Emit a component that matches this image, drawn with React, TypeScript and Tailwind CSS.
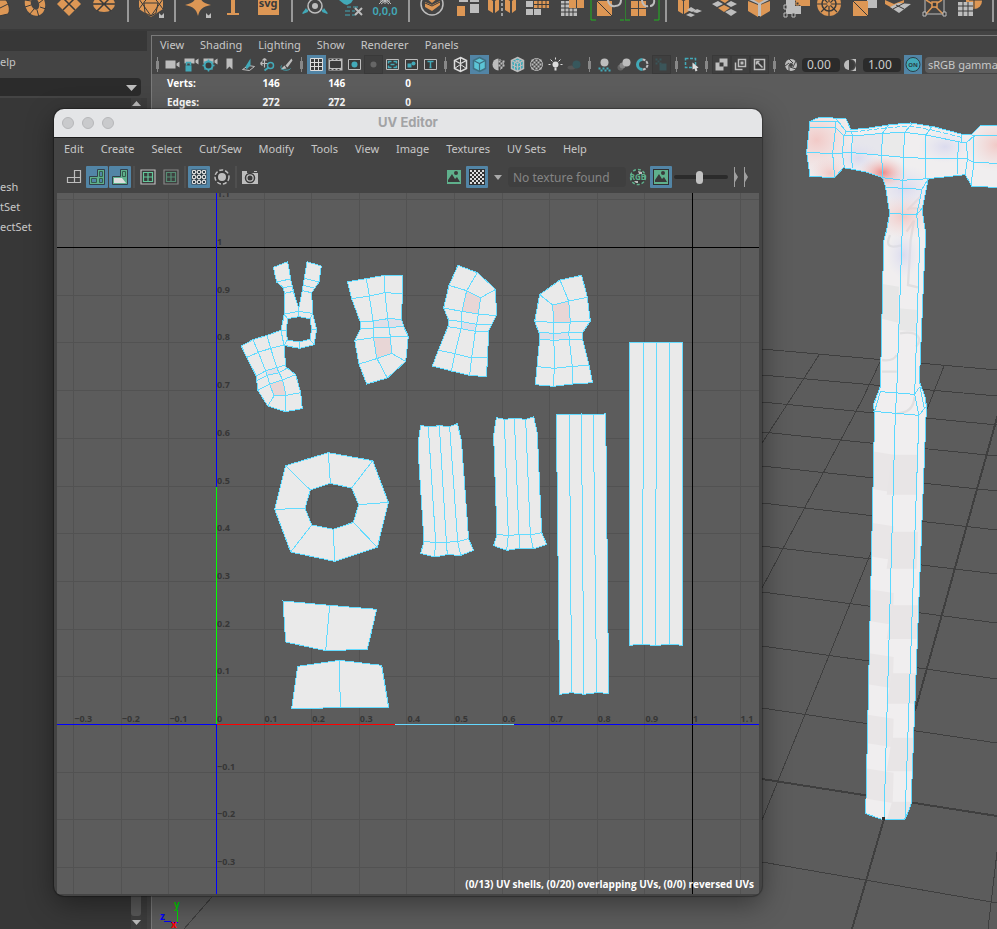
import React from 'react';

const O = '#dd9755';
const G = '#bdbdbd';
const T = '#42a9b8';
const D = '#3a3a3a';
const M = '#5fb08c';

/* ---------- Shelf ---------- */

const corner = <path d="M8 18V13L13 18H8ZM13 13V18H8Z" fill={G} />;

const shelf: (React.ReactNode | null)[] = [
  <path d="M0 0H7C11 5 11 12 9 14L0 16Z M1 8L9 4" fill={O} stroke={D} strokeWidth="1" />,
  <g>
    <ellipse cx="1" cy="4" rx="7" ry="9" fill="none" stroke={O} strokeWidth="6" transform="rotate(-18 1 4)" />
    <path d="M-9 7L-3 5M-5 15L0 9M5 17L3 10M12 9L6 7M10 -1L5 3M-9 0L-3 1" stroke={D} strokeWidth="1" />
  </g>,
  <g>
    <path d="M0 -8L12 4L0 16L-12 4Z" fill={O} />
    <path d="M-6 -2L6 10M6 -2L-6 10" stroke={D} strokeWidth="1.5" />
  </g>,
  <g>
    <ellipse cx="0" cy="4" rx="11" ry="8" fill={O} />
    <path d="M-11 4H11M-7 -3L7 11M7 -3L-7 11" stroke={D} strokeWidth="1.5" />
  </g>,
  null,
  <g>
    <path d="M0 -8L12 -2V9L0 17L-12 9V-2Z" fill={O} />
    <path d="M-12 -1L0 16L12 -1M-12 9L-6 1L0 -5L6 1L12 9M-7 3H7L5 13L0 16L-6 13Z" fill="none" stroke={D} strokeWidth="1" />
    {corner}
  </g>,
  null,
  <g>
    <path d="M0 -9C2 0 4 3 13 5C4 7 2 9 0 16C-2 9 -4 7 -13 5C-4 3 -2 0 0 -9Z" fill={O} />
    {corner}
  </g>,
  <path d="M-2 0H2V13H6V15H-6V13H-2Z" fill={O} />,
  <g>
    <path d="M-10 -5H11V15H-10Z" fill={O} />
    <text x="0" y="7" textAnchor="middle" fontSize="11" fontWeight="700" fill="#3a3a3a" fontFamily="Noto Sans">svg</text>
  </g>,
  null,
  <g>
    <circle cx="0" cy="6" r="7" fill="none" stroke={G} strokeWidth="1.5" />
    <circle cx="0" cy="6" r="3" fill={G} />
    <path d="M0 -4V-1M-7 10L-12 13M7 10L12 13" stroke={T} strokeWidth="2" />
    <path d="M-9 8L-7 12L-13 14ZM9 8L7 12L13 14Z" fill={T} />
  </g>,
  <g>
    <path d="M-11 0H3L1 3L-3 5L-6 4Z" fill={T} />
    <path d="M-3 7H1M3 7H8M-5 11H0M2 11H5M-5 15H0M2 15H5" stroke={T} strokeWidth="1" />
    <path d="M5 8L12 15M12 8L5 15" stroke={G} strokeWidth="2" />
  </g>,
  <g>
    <path d="M0 -3V4M-5 1H5M-6 4L-2 0M6 4L2 0M-4 -2L4 4M4 -2L-4 4" stroke={G} strokeWidth="1" />
    <text x="0" y="15" textAnchor="middle" fontSize="11" fontWeight="600" fill={T} fontFamily="Noto Sans">0,0,0</text>
  </g>,
  null,
  <g>
    <circle cx="0" cy="4" r="11" fill="none" stroke={G} strokeWidth="1.5" />
    <path d="M-7 2L0 5L8 1V5L0 11L-7 7ZM-6 -2H6L0 3Z" fill={O} />
    <path d="M-7 3L0 6L8 2" fill="none" stroke={D} />
  </g>,
  <g>
    <path d="M-8 -4H1V2H-8ZM3 -4H12V2H3ZM3 4H12V13H3Z" fill={G} />
    <path d="M-10 6H-2V16H-10Z" fill={O} />
  </g>,
  <g>
    <path d="M-14 -2L-9 1V13L-14 10ZM-7 1L-3 -2V10L-7 13ZM3 -2L8 1V13L3 10ZM10 1L14 -2V10L10 13Z" fill={O} />
    <path d="M0 -2V17" stroke={G} strokeWidth="1.5" strokeDasharray="3 2" />
  </g>,
  <g>
    <path d="M-11 1H-4V7H-11ZM-11 9H-4V15H-11ZM-3 9H4V15H-3Z" fill={G} />
    <path d="M-3 1H12V8H-3Z" fill={O} />
    <path d="M-3 4.500H12M1 0V8M5 0V8M9 0V8" stroke={D} />
  </g>,
  <g>
    <path d="M-11 1H-3V8H5V16H-11Z" fill={G} />
    <path d="M-7 0V16M-3 8V16M1 8V16M-11 4H-3M-11 8H5M-11 12H5" stroke={D} />
    <path d="M-3 0H4V8H-3ZM5 0H12V8H5Z" fill={O} />
  </g>,
  <g>
    <path d="M-16 0V20H-11M17 20H13" fill="none" stroke="#1fb51f" />
    <path d="M-10 1H5V16H-10Z" fill={O} />
    <path d="M-10 1L5 16" stroke={D} />
    <path d="M1 0C1 4 5 7 8 6M14 0C14 4 12 6 8 6" fill="none" stroke={G} strokeWidth="2" />
  </g>,
  <g>
    <path d="M-17 0V20H-12M17 0V20H12" fill="none" stroke="#1fb51f" />
    <path d="M-11 1H-4V8H-11ZM-3 1H4V8H-3ZM-11 9H-4V16H-11ZM-3 9H4V16H-3Z" fill={O} />
    <path d="M0 0C0 4 3 7 6 6M12 0C13 4 10 6 8 6" fill="none" stroke={G} strokeWidth="2" />
  </g>,
  null,
  <g>
    <path d="M-11 -2L-6 1V14L-11 11ZM-5 1L0 -2V11L-5 14Z" fill={O} />
    <path d="M2 7L7 10L3 12L-2 10ZM8 9L13 11L8 13L4 12ZM1 13L6 15L2 17L-3 15Z" fill={G} />
  </g>,
  <g>
    <path d="M-12 4L-6 1L-1 4L-7 7ZM7 1L13 4L7 7L2 4ZM1 12L7 9L13 12L7 16Z" fill={G} />
    <path d="M-6 8L0 5L6 8L0 12ZM-4 0L1 -3L5 0L1 3Z" fill={O} />
  </g>,
  <g>
    <path d="M-11 1L-1 5V17L-11 11ZM11 1L1 5V17L11 11Z" fill={O} />
    <path d="M-10 0L0 -5L10 0L2 4V16H-1V4Z" fill={G} />
    <path d="M-5 0H5L0 3Z" fill={O} />
  </g>,
  <g>
    <path d="M-8 0H1V6H7V14H-8Z" fill={G} />
    <path d="M1 0H16V6H7L3 3Z" fill={O} />
    <path d="M-10 5H-7V9H-10ZM-10 13H-7V17H-10ZM-2 13H1V17H-2Z" fill={D} stroke={G} />
    <path d="M2 2H5V5H2Z" fill={D} stroke={O} />
  </g>,
  <g>
    <circle cx="0" cy="4" r="12" fill={O} />
    <circle cx="0" cy="4" r="7" fill="none" stroke={D} strokeWidth="1.5" />
    <path d="M-12 4H12M0 -8V16M-8 -4L8 12M8 -4L-8 12" stroke={D} strokeWidth="1.2" />
    <circle cx="0" cy="4" r="2" fill={O} />
  </g>,
  <g>
    <path d="M3 -3H13V8H3Z" fill={G} />
    <path d="M-11 1H4V16H-11Z" fill={O} />
    <path d="M-11 1L4 16" stroke={D} />
  </g>,
  <g>
    <path d="M-14 0L-5 4L5 0V4L-5 9L-14 4Z" fill={O} />
    <path d="M-9 7L-1 3L12 4L0 13Z" fill={G} />
    <path d="M-6 9L5 3M-3 5L5 9" stroke={D} />
  </g>,
  <g>
    <path d="M-9 0V14M10 0V14M-9 14H10" stroke={G} />
    <path d="M-8 14L0 5L9 14M-8 0L0 5L8 0" fill="none" stroke={O} strokeWidth="1.5" />
    <path d="M-2 2H3V7H-2Z" fill={D} stroke={O} strokeWidth="1.5" />
    <path d="M-11 12H-8V16H-11ZM9 12H12V16H9Z" fill={D} stroke={G} />
  </g>,
  <g>
    <circle cx="5" cy="1" r="8" fill={O} />
    <path d="M-11 2H4V16H-11Z" fill={G} />
    <path d="M-6 2V16M-1 2V16M-11 6H4M-11 11H4" stroke={D} />
    <path d="M0 0H14M5 0V9" stroke={D} />
  </g>,
  null,
];

function Shelf() {
  return (
    <header className="flex h-[30px] shrink-0 overflow-hidden border-b border-[#3a3a3a] bg-[#444444]">
      <div className="-ml-[18px] flex">
        {shelf.map((icon, i) =>
          icon === null ? (
            <span key={i} className="flex w-3 shrink-0 justify-center">
              <span className="h-[22px] w-[2px] bg-[#999999]" />
            </span>
          ) : (
            <button key={i} type="button" aria-label={`Shelf tool ${i + 1}`} className="shrink-0">
              <svg width="35" height="30" viewBox="-17 0 35 30" className="block">{icon}</svg>
            </button>
          ),
        )}
      </div>
    </header>
  );
}

/* ---------- Left panel ---------- */

function SidePanel() {
  return (
    <aside className="flex w-[147px] shrink-0 flex-col bg-[#373737] pt-5">
      <div className="flex min-h-0 flex-1 flex-col bg-[#444444]">
        <button type="button" className="h-[22px] self-start text-[11px] text-[#c4c4c4]">elp</button>
        <label className="relative mt-[5px] mr-[6px] block h-[18px]">
          <select aria-label="Filter" className="block h-full w-full appearance-none rounded-r-sm bg-[#2b2b2b]" />
          <svg width="11" height="6" className="absolute top-[7px] right-1"><path d="M0 0H11L5.500 6Z" fill="#bdbdbd" /></svg>
        </label>
        <div className="mt-[2px] flex min-h-0 flex-1 bg-[#373737]">
          <ul className="min-w-0 flex-1 pt-[79px] text-[11px] leading-5 text-[#c8c8c8]">
            <li>esh</li>
            <li>tSet</li>
            <li>ectSet</li>
          </ul>
          <div className="flex w-[10px] flex-col items-center bg-[#3f3f3f]">
            <svg width="9" height="5" className="my-[3px] shrink-0"><path d="M0 5H9L4.500 0Z" fill="#bdbdbd" /></svg>
            <div className="w-full flex-1 rounded-[3px] bg-[#5a5a5a]" />
            <svg width="9" height="5" className="my-1 shrink-0"><path d="M0 0H9L4.500 5Z" fill="#bdbdbd" /></svg>
          </div>
          <div className="w-[6px] bg-[#3d3d3d]" />
        </div>
      </div>
    </aside>
  );
}

/* ---------- Viewport toolbar ---------- */

const frame = <path d="M-6 -5H6V5H-6Z" fill={D} stroke={G} />;

type Tool = { icon: React.ReactNode; on?: boolean; dim?: boolean; box?: boolean } | null;

const cube = (fill: string, line: string) => (
  <g>
    <path d="M0 -7L6 -4V4L0 7L-6 4V-4Z" fill={fill} stroke={line} strokeWidth="1.5" />
    <path d="M-6 -4L0 -1L6 -4M0 -1V7" fill="none" stroke={line} strokeWidth="1.2" />
  </g>
);

const dots = (x0: number, y0: number, n: number, m: number, s: number, fill: string) => {
  const out: React.ReactNode[] = [];
  for (let r = 0; r < m; r++)
    for (let c = 0; c < n; c++)
      if ((r + c) % 2 === 0) out.push(<rect key={`${r}-${c}`} x={x0 + c * s} y={y0 + r * s} width={s} height={s} fill={fill} />);
  return out;
};

const viewTools: Tool[] = [
  null,
  { icon: <path d="M-7 -4H3V4H-7ZM4 -1L7 -3V3L4 1Z" fill={G} /> },
  { icon: <g><path d="M-7 -6H3V-1H-7ZM4 -4L7 -6V0L4 -2Z" fill={G} /><path d="M-7 -1H1V7H-7Z" fill="#444444" /><path d="M-6 1H0V7H-6Z" fill={T} /><path d="M-5 1V-2H-1V1" fill="none" stroke={T} strokeWidth="1.5" /></g> },
  { icon: <g><path d="M-7 -6H3V-1H-7ZM4 -4L7 -6V0L4 -2Z" fill={G} /><circle cx="-2" cy="1" r="4" fill={D} stroke={T} strokeWidth="2" /><path d="M-2 -5V-3M-2 5V7M-8 1H-6M2 1H4M-6 -3L-5 -2M2 5L1 4M-6 5L-5 4M2 -3L1 -2" stroke={T} strokeWidth="1.5" /></g> },
  { icon: <path d="M-3 -6H3V5L0 2L-3 5Z" fill={G} /> },
  { icon: <g><path d="M-6 5L1 6L6 2L0 1Z" fill="none" stroke={G} /><path d="M-3 2L2 -6V1L-2 5Z" fill={T} /></g> },
  { icon: <g><path d="M-7 -1H1M-3 -6V3M-7 -1L-5 -3M-7 -1L-5 1M-3 -6L-5 -4M-3 -6L-1 -4" stroke={G} strokeWidth="1.2" /><circle cx="3" cy="1" r="3" fill="none" stroke={T} strokeWidth="1.5" /><path d="M1 3L-3 6" stroke={T} strokeWidth="2" /></g> },
  { icon: <g><path d="M5 -6L-1 1L1 3L6 -4Z" fill={G} /><path d="M-2 1L0 4L-6 5Z" fill={G} /><path d="M-5 1C-8 6 2 7 4 4" fill="none" stroke={T} /></g> },
  null,
  { on: true, icon: <path d="M-6 -6H6V6H-6ZM-2 -6V6M2 -6V6M-6 -2H6M-6 2H6" fill={D} stroke="#dddddd" /> },
  { icon: <g><path d="M-7 -6H7V6H-7Z" fill={G} /><path d="M-5 -3H5V3H-5ZM-6 -5H-4M-2 -5H0M2 -5H4M-6 5H-4M-2 5H0M2 5H4" fill={D} stroke={D} /></g> },
  { icon: <g>{frame}<circle r="3" fill={T} /></g> },
  { box: true, dim: true, icon: <circle r="3" fill="#666666" /> },
  { icon: <g>{frame}<path d="M-4 -1V-3H-1M4 -1V-3H1M-4 1V3H-1M4 1V3H1M-2 0H2" stroke={T} fill="none" strokeWidth="1.5" /></g> },
  { icon: <g>{frame}<path d="M-4 3V-1H0V3Z" fill={T} /><circle cx="2" cy="-1" r="2" fill={T} /></g> },
  { icon: <g>{frame}<path d="M-3 -3H3M0 -3V3M-1 3H1" stroke={T} strokeWidth="1.5" /></g> },
  null,
  { icon: <g>{cube('#444444', '#dddddd')}<path d="M0 -7V0L-6 4M0 0L6 4" stroke="#dddddd" fill="none" /></g> },
  { on: true, icon: cube('#5cc5d6', '#3f6f80') },
  { icon: <g><path d="M0 -6A6 6 0 0 0 0 6Z" fill={G} /><circle r="5" fill="none" stroke={G} strokeDasharray="2 2" />{dots(0, -4, 3, 4, 2, G)}</g> },
  { icon: <g>{cube(T, G)}<path d="M-3 -5L3 -2V6M3 -5L-3 -2V6M-6 0L0 3L6 0" stroke={G} fill="none" /></g> },
  { icon: <g><circle r="6" fill="none" stroke={G} />{dots(-5, -5, 5, 5, 2, G)}</g> },
  { icon: <g><circle cy="0" r="3" fill="#dddddd" /><path d="M-1 3H1V6H-1Z" fill="#dddddd" /><path d="M0 -7V-5M-7 0H-5M5 0H7M-5 -5L-3 -3M5 -5L3 -3" stroke="#dddddd" fill="none" /></g> },
  { dim: true, icon: <g><ellipse cx="-3" cy="3" rx="4" ry="2" fill="#555555" /><circle cx="2" cy="0" r="4" fill="#37575c" /></g> },
  null,
  { icon: <g><circle cy="-2" r="4" fill={G} />{dots(-6, 3, 6, 2, 2, T)}</g> },
  { icon: <g><circle cx="-3" cy="3" r="3" fill="#666666" /><circle cx="-1" cy="1" r="3" fill="#888888" /><circle cx="3" cy="-2" r="4" fill={G} /></g> },
  { icon: <g><path d="M0 -5A5 5 0 0 0 0 5" fill="none" stroke={T} strokeWidth="3" /><path d="M0 -5A5 5 0 0 1 0 5" fill="none" stroke={G} strokeWidth="2" strokeDasharray="3 1" /></g> },
  { box: true, dim: true, icon: <g><path d="M-2 -1H5V6H-2Z" fill="#3b5559" />{dots(-6, -6, 3, 3, 2, '#3b5559')}</g> },
  null,
  { icon: <g><path d="M-6 -6H4V3H-6Z" fill="none" stroke={T} strokeWidth="1.5" strokeDasharray="3 1.5" /><path d="M1 -2L7 3L5 4L6 6L4 7L3 4L1 5Z" fill="#dddddd" /></g> },
  null,
  { box: true, icon: <g><path d="M-2 -6H6V2H-2Z" fill={G} /><path d="M-6 -2H2V6H-6Z" fill={G} /><path d="M-2 -2H2V2H-2Z" fill={D} /></g> },
  { box: true, icon: <g><path d="M-2 -5H5V2H-2Z" fill={D} stroke={G} strokeWidth="1.5" /><path d="M-5 -2V5H2" fill="none" stroke={G} strokeWidth="1.5" /><path d="M0 -3H3V0H0Z" fill={G} /></g> },
  { box: true, icon: <g><path d="M-5 -5H5V5H-5Z" fill={D} stroke={G} strokeWidth="1.5" /><path d="M-3 -3L3 3M-3 -3H0M-3 -3V0" stroke={G} strokeWidth="1.5" /></g> },
  null,
];

function Grip() {
  return (
    <span className="flex w-[11px] shrink-0 items-center justify-center">
      <svg width="3" height="15"><path d="M1 0H2V15H1ZM0 4H3V12H0Z" fill="#888888" /></svg>
    </span>
  );
}

function NumberField({ label, value }: { label: string; value: string }) {
  return <input aria-label={label} defaultValue={value} className="h-[14px] w-[38px] shrink-0 rounded-sm bg-[#2b2b2b] pl-[5px] text-xs text-[#cccccc]" />;
}

function ViewportToolbar() {
  return (
    <div className="flex h-[19px] shrink-0 items-center overflow-hidden">
      {viewTools.map((t, i) =>
        t === null ? (
          <Grip key={i} />
        ) : (
          <button
            key={i}
            type="button"
            aria-label={`View option ${i}`}
            className={
              t.on
                ? 'w-[19px] shrink-0 bg-[#5285a6]'
                : t.box
                  ? 'w-[19px] shrink-0 border border-[#393939] bg-[#3f3f3f]'
                  : 'w-[19px] shrink-0'
            }
          >
            <svg width={t.box ? 17 : 19} height={t.box ? 17 : 19} viewBox={t.box ? '-8.5 -8.5 17 17' : '-9.5 -9.5 19 19'} className="block">{t.icon}</svg>
          </button>
        ),
      )}
      <svg width="22" height="18" viewBox="-11 -9 22 18" className="shrink-0">
        <circle r="6" fill={G} />
        <circle r="2" fill="#444444" />
        <path d="M-2 -6L2 -2M5 -4L2 2M5 4L-1 2M-2 6L-2 0M-6 1L-2 -2" stroke="#444444" />
      </svg>
      <NumberField label="Exposure" value="0.00" />
      <svg width="23" height="18" viewBox="-11 -9 23 18" className="shrink-0">
        <path d="M-1 -6H5V6H-1A6 6 0 0 0 -1 -6Z" fill={G} />
        <path d="M-2 -5A5 5 0 0 0 -2 5Z" fill={G} />
        <path d="M-2 -5A5 5 0 0 1 -2 5Z" fill={D} />
      </svg>
      <NumberField label="Gamma" value="1.00" />
      <button type="button" aria-label="Color management" className="mx-[3px] w-[18px] shrink-0 bg-[#5285a6]">
        <svg width="18" height="19" viewBox="-9 -9.5 18 19" className="block">
          <circle r="7" fill={T} stroke="#2c3e44" />
          <text y="2" textAnchor="middle" fontSize="6" fontWeight="700" fill="#2c3e44" fontFamily="Noto Sans">ON</text>
        </svg>
      </button>
      <select aria-label="View transform" className="h-4 min-w-[150px] appearance-none rounded-sm bg-[#5d5d5d] pl-[3px] text-[11px] leading-4 text-[#c8c8c8]">
        <option>sRGB gamma</option>
      </select>
    </div>
  );
}

/* ---------- 3D scene ---------- */

const floor = [
  'M762 349L997 370', 'M762 375L997 396', 'M762 402L997 425', 'M762 432L997 456', 'M762 466L997 491',
  'M762 503L997 530', 'M762 546L997 574', 'M762 592L997 623', 'M762 646L997 679', 'M762 708L997 743',
  'M762 862L997 903', 'M819 355L790 400L762 443', 'M881 360L862 400L762 588', 'M944 366L870 555L762 820', 'M997 852L988 929',
  'M212 897L184 929',
];

const hammerOutline =
  '60,64 88,52 168,56 182,88 225,86 300,74 362,69 430,80 480,93 520,104 544,104 572,76 640,76 640,262 546,260 526,224 415,236 398,320 396,330 407,400 400,560 388,845 407,895 409,925 363,2115 345,2158 282,2160 227,2141 254,941 250,915 271,860 278,560 281,425 290,390 299,340 287,262 278,233 225,215 160,203 134,233 60,229 50,158';

const hammerEdges = [
  '60,82 137,83 162,108 188,108 278,100 344,97 408,105 515,127 530,127 552,108 640,108',
  '50,158 128,160 187,158 275,166 340,172 405,175 530,176 552,187 640,191',
  '137,62 137,83 128,160 134,233', '60,64 145,66 168,94 190,96',
  '137,54 148,68 168,94', '162,108 157,160 163,203', '184,94 188,108 184,150 187,205',
  '277,100 275,166 278,233 337,241 415,236', '344,97 340,172 337,380 320,880 316,940 282,2160',
  '408,105 405,236', '505,125 502,222', '530,127 532,178 526,224', '552,108 552,187 543,255',
  '287,262 396,268 415,236', '299,340 380,345 398,322', '396,268 380,345 389,430 374,883 387,946 345,2158',
  '271,875 374,883 388,862', '250,934 387,946 407,920', '277,100 295,76', '344,97 366,71', '408,105 425,80',
  '515,127 514,105', '545,104 556,110', '162,108 168,94', '271,875 255,930', '390,860 403,925',
];

const handleBands: [number, number, number, number][] = [
  [1050, 1163, 1064, 1184], [1265, 1366, 1295, 1406], [1465, 1560, 1516, 1617],
  [1657, 1751, 1720, 1811], [1842, 1928, 1913, 2014], [2004, 2095, 2105, 2162],
];

function Scene() {
  return (
    <svg className="block h-full w-full" aria-label="Perspective view">
      <defs>
        <radialGradient id="red"><stop offset="0" stopColor="#ee7672" stopOpacity="0.85" /><stop offset="1" stopColor="#f2c8c6" stopOpacity="0" /></radialGradient>
        <radialGradient id="pink"><stop offset="0" stopColor="#f2bdb9" stopOpacity="0.75" /><stop offset="1" stopColor="#f3d2d0" stopOpacity="0" /></radialGradient>
        <radialGradient id="lav"><stop offset="0" stopColor="#d6d6ee" stopOpacity="0.8" /><stop offset="1" stopColor="#e0e0f0" stopOpacity="0" /></radialGradient>
        <clipPath id="hammer"><polygon points={hammerOutline} /></clipPath>
      </defs>
      <g transform="translate(-152 -74)">
        <g stroke="#3f3f3f" fill="none" shapeRendering="crispEdges">
          {floor.map((d) => <path key={d} d={d} />)}
          <path d="M762 779L997 816M998 414L915 711M884 819L852 929" strokeWidth="2" />
        </g>
        <g transform="translate(790 100) scale(0.33333)">
          <polygon points={hammerOutline} fill="#f0eeef" />
          <g clipPath="url(#hammer)">
            <polygon points="190,108 278,100 275,166 187,158" fill="#e6e6ec" />
            <polygon points="278,100 340,97 340,172 275,166" fill="#eaeaea" />
            {handleBands.map(([l0, l1, r0, r1]) => (
              <g key={l0}>
                <polygon points={`220,${l0} 311,${l0 + 14} 308,${l1 + 14} 220,${l1}`} fill="#e9e6e7" />
                <polygon points={`306,${r0} 384,${r0} 380,${r1} 290,${r1}`} fill="#e8e5e6" />
              </g>
            ))}
            <polygon points="278,552 327,560 324,668 276,656" fill="#e6e6e6" />
            <polygon points="327,625 382,630 378,695 325,690" fill="#e7e7e7" />
            <path d="M350 395L372 362L362 420L354 555L384 562M300 405C285 440 300 445 334 436M330 700C390 690 396 720 378 740M276 780Q310 785 320 765M276 815H320M352 330L392 290M355 325L392 325M320 940Q370 940 374 890" fill="none" stroke="#e0dfe0" strokeWidth="7" />
            <ellipse cx="80" cy="120" rx="120" ry="110" fill="url(#pink)" />
            <ellipse cx="120" cy="220" rx="60" ry="50" fill="url(#pink)" />
            <ellipse cx="620" cy="135" rx="90" ry="80" fill="url(#pink)" />
            <ellipse cx="205" cy="175" rx="70" ry="50" fill="url(#lav)" />
            <ellipse cx="465" cy="140" rx="80" ry="50" fill="url(#lav)" />
            <ellipse cx="345" cy="265" rx="90" ry="70" fill="url(#lav)" />
            <ellipse cx="340" cy="350" rx="90" ry="65" fill="url(#pink)" />
            <ellipse cx="340" cy="465" rx="50" ry="70" fill="url(#lav)" />
            <ellipse cx="278" cy="218" rx="75" ry="50" fill="url(#red)" />
          </g>
          <g fill="none" stroke="#5bd8ff" shapeRendering="crispEdges">
            <polygon points={hammerOutline} vectorEffect="non-scaling-stroke" />
            {hammerEdges.map((p) => <polyline key={p} points={p} vectorEffect="non-scaling-stroke" />)}
            <polyline points="190,96 285,84 360,78 425,90 514,112" strokeDasharray="5 2" vectorEffect="non-scaling-stroke" />
          </g>
        </g>
        <rect x="882" y="817" width="3" height="3" fill="#303030" />
        <path d="M177.500 910V922" stroke="#00e000" />
        <path d="M164 921.500H171M171 922.500H178" stroke="#0000ff" />
        <g fontFamily="Noto Sans" fontSize="10" fontWeight="700">
          <text x="174" y="908" fill="#00d000">y</text>
          <text x="160" y="920" fill="#0000ff">z</text>
          <text x="171" y="928" fill="#ff0000">x</text>
        </g>
      </g>
    </svg>
  );
}

function Viewport() {
  return (
    <section className="mt-1 ml-1 flex min-w-0 flex-1 flex-col border-t border-l border-[#7a7a7a] bg-[#444444]">
      <nav className="flex h-[19px] shrink-0 items-center gap-4 pl-2 text-[11px] text-[#c8c8c8]">
        {['View', 'Shading', 'Lighting', 'Show', 'Renderer', 'Panels'].map((m) => <button key={m} type="button">{m}</button>)}
      </nav>
      <ViewportToolbar />
      <div className="relative min-h-0 flex-1 bg-[#5c5c5c]">
        <Scene />
        <table className="absolute top-0 left-[15px] w-[244px] table-fixed text-[10px] leading-[19px] font-bold text-white">
          <tbody>
            <tr><th className="w-[47px] text-left">Verts:</th><td className="text-right">146</td><td className="text-right">146</td><td className="text-right">0</td></tr>
            <tr><th className="text-left">Edges:</th><td className="text-right">272</td><td className="text-right">272</td><td className="text-right">0</td></tr>
          </tbody>
        </table>
      </div>
    </section>
  );
}

/* ---------- UV canvas ---------- */

type Shell = { at: [number, number]; outline: string; hole?: string; edges: string[]; pink?: string; lilac?: string };

const shells: Shell[] = [
  {
    at: [225, 250],
    outline: '145,52 188,35 197,87 206,127 221,175 231,127 238,85 246,35 289,48 282,96 260,128 263,190 275,238 267,284 223,295 177,286 168,241 178,192 178,128 174,112 155,96',
    hole: '188,206 221,200 255,206 260,238 255,268 222,276 187,270 184,240',
    edges: ['155,96 195,87', '176,113 200,108', '178,130 206,124', '238,85 282,96', '235,106 266,114', '231,122 260,128', '178,192 221,184 263,190', '178,192 188,206', '221,175 221,200', '263,190 255,206', '275,238 260,238', '267,284 255,268', '223,295 222,276', '177,286 187,270', '168,241 184,240'],
  },
  {
    at: [225, 250],
    outline: '49,288 84,269 126,256 168,241 177,286 182,350 212,374 227,428 232,476 182,485 128,468 98,420 94,378 65,322',
    edges: ['65,322 100,307 137,295 177,285', '84,269 100,307 123,365 134,402 147,438 128,468', '126,256 137,295 156,355 173,390 183,436 182,485', '94,378 123,362 182,345', '96,392 128,375 160,369 185,355', '98,420 134,402 172,390 212,374', '147,438 183,436 227,428'],
    pink: '134,402 172,390 183,436 147,438',
    lilac: '123,362 156,354 160,370 128,378',
  },
  {
    at: [225, 250],
    outline: '367,95 424,86 478,76 533,76 530,208 536,230 550,259 542,334 487,384 425,402 402,342 389,271 406,237 406,216 380,146',
    edges: ['380,146 433,138 480,128 532,131', '424,86 433,138 444,212 446,265 455,324 487,384', '478,76 480,128 488,206 496,260 500,310 542,334', '406,216 444,213 488,206 530,208', '406,237 446,234 536,230', '389,271 446,263 550,259', '402,342 455,326 500,310'],
    pink: '446,265 496,260 500,310 455,324',
    lilac: '444,213 488,206 530,208 534,230 446,234',
  },
  {
    at: [415, 250],
    outline: '129,46 187,68 242,118 244,197 222,240 217,322 215,380 164,376 109,363 52,348 70,301 99,230 100,208 86,174 102,106',
    edges: ['102,106 155,122 197,143 242,118', '187,68 155,122 141,184 138,236 120,310 109,363', '197,143 190,192 181,244 170,322 164,376', '86,174 140,184 190,192 244,197', '102,210 140,215 185,223 230,224', '99,230 138,236 181,244 221,244', '70,301 120,311 168,323 217,322'],
    pink: '155,122 197,143 190,192 141,184',
    lilac: '140,215 185,223 181,244 138,236',
  },
  {
    at: [415, 250],
    outline: '374,134 435,90 500,76 517,142 526,213 503,248 503,269 522,346 533,398 473,402 415,409 361,404 366,350 374,268 372,248 359,214',
    edges: ['374,134 413,165 461,153 517,142', '435,90 461,153 466,216 461,250 472,350 473,402', '413,165 416,216 418,355 415,409', '359,214 416,217 466,216 526,213', '372,247 418,250 461,248 503,248', '374,268 418,271 461,268 503,268', '366,350 418,355 471,349 522,346'],
    pink: '413,165 461,153 466,216 416,216',
    lilac: '374,247 461,250 461,268 374,268',
  },
  {
    at: [210, 430],
    outline: '227,107 355,68 488,92 535,217 502,352 374,394 242,366 194,238',
    hole: '301,180 361,160 425,174 446,224 430,277 370,298 305,285 285,235',
    edges: ['227,107 301,180', '355,68 361,160', '488,92 425,174', '535,217 446,224', '502,352 430,277', '374,394 370,298', '242,366 305,285', '194,238 285,235'],
  },
  { at: [210, 430], outline: '219,513 359,526 500,538 472,658 347,662 227,636', edges: ['359,526 347,662'] },
  { at: [210, 430], outline: '263,709 388,691 515,706 536,832 245,835', edges: ['388,691 391,832'] },
  {
    at: [400, 400],
    outline: '62,76 85,81 118,77 149,80 172,71 184,120 205,405 206,418 221,451 182,466 141,464 103,471 62,460 72,424 55,160 57,110',
    edges: ['85,81 107,428 103,471', '118,77 139,425 142,464', '149,80 173,425 182,466', '72,424 107,428 173,425 206,416'],
  },
  {
    at: [400, 400],
    outline: '289,53 313,58 343,55 377,58 401,50 412,100 425,398 440,433 400,447 357,445 320,451 281,437 291,403 283,170 281,105',
    edges: ['313,58 325,407 320,451', '343,55 357,404 358,445', '377,58 391,404 400,447', '291,403 325,407 357,403 391,405 425,398'],
  },
  {
    at: [400, 400],
    outline: '469,44 606,44 617,40 626,880 590,878 552,883 515,878 479,883',
    edges: ['508,44 515,878', '544,40 552,883', '580,44 590,878'],
  },
  {
    at: [400, 400],
    outline: '688,-174 848,-174 848,736 808,732 766,737 728,732 688,736',
    edges: ['731,-174 727,732', '770,-174 766,737', '808,-174 808,732'],
  },
];

const ticks = Array.from({ length: 15 }, (_, i) => i - 3);
const tickLabel = (k: number) => (k < 0 ? '−' : '') + String(Math.abs(k) / 10);

function UVCanvas() {
  return (
    <svg className="block h-full w-full" aria-label="UV layout">
      <g transform="translate(-57 -193)">
        <g stroke="#525252" shapeRendering="crispEdges">
          {ticks.map((k) => {
            const x = Math.round(216 + k * 47.6) + 0.5;
            const y = Math.round(724 - k * 47.7) + 0.5;
            return (
              <g key={k}>
                <path d={`M${x} 193V894`} />
                <path d={`M57 ${y}H759`} />
              </g>
            );
          })}
        </g>
        <path d="M692.500 193V894M57 247.500H759" stroke="#000000" />
        <g fill="#363636" fontFamily="Noto Sans" fontSize="9" fontWeight="700">
          {ticks.map((k) => (
            <g key={k}>
              <text x={217 + k * 47.6} y="722">{tickLabel(k)}</text>
              {k !== 0 && <text x="217" y={722 - k * 47.7}>{tickLabel(k)}</text>}
            </g>
          ))}
        </g>
        {shells.map((s, i) => (
          <g key={i} transform={`translate(${s.at[0]} ${s.at[1]}) scale(0.33333)`}>
            <path d={`M${s.outline}Z${s.hole ? `M${s.hole}Z` : ''}`} fillRule="evenodd" fill="#eaeaea" />
            {s.pink && <polygon points={s.pink} fill="#e8d6d6" />}
            {s.lilac && <polygon points={s.lilac} fill="#e0dfe8" />}
            <g fill="none" stroke="#63dbff" shapeRendering="crispEdges">
              <polygon points={s.outline} vectorEffect="non-scaling-stroke" />
              {s.hole && <polygon points={s.hole} vectorEffect="non-scaling-stroke" />}
              {s.edges.map((e) => <polyline key={e} points={e} vectorEffect="non-scaling-stroke" />)}
            </g>
          </g>
        ))}
        <path d="M216.500 193V487M216.500 724V894M57 724.500H216M514 724.500H759" stroke="#0000ff" />
        <path d="M216.500 487V724" stroke="#00ff00" />
        <path d="M217 724.500H395" stroke="#ff0000" />
        <path d="M395 724.500H514" stroke="#63d8ff" />
      </g>
    </svg>
  );
}

/* ---------- UV Editor window ---------- */

const uvShape = (fill: string) => <path d="M0.500 -7.500H7.500V7.500H-7.500V-0.500H0.500Z" fill={fill} stroke="#34404a" />;

const uvTools: Tool[] = [
  { icon: <path d="M0.500 -6.500H6.500V5.500H-6.500V0.500H0.500ZM0.500 0.500V5.500M0.500 0.500H6.500" fill="none" stroke={G} strokeWidth="1.200" /> },
  { on: true, icon: <g>{uvShape(M)}<path d="M2.500 -5.500H5.500V-0.500H2.500ZM-5.500 1.500H-0.500V5.500H-5.500ZM2.500 1.500H5.500V5.500H2.500Z" fill="#5285a6" stroke="#34604e" /></g> },
  { on: true, icon: <g>{uvShape(M)}<path d="M2.500 -5.500H5.500V-0.500H2.500Z" fill="none" stroke="#34604e" /><path d="M-6 1H2L6 6H-6Z" fill="#dddddd" /></g> },
  null,
  { icon: <g><path d="M-7 -7H7V7H-7Z" fill={D} stroke={G} strokeWidth="1.2" /><path d="M-4.500 -4.500H4.500V4.500H-4.500ZM0 -5V5M-5 0H5" fill="none" stroke="#65c79b" strokeWidth="1.2" /></g> },
  { icon: <g opacity="0.55"><path d="M-7 -7H7V7H-7Z" fill={D} stroke={G} strokeWidth="1.2" /><path d="M-4.500 -4.500H4.500V4.500H-4.500ZM0 -5V5M-5 0H5" fill="none" stroke="#65c79b" strokeWidth="1.2" /></g> },
  null,
  { on: true, icon: <g><path d="M-7.500 -7.500H7.500V7.500H-7.500Z" fill="#303d46" /><path d="M-6.500 -6.500H-3.500V-3.500H-6.500ZM-1.500 -6.500H1.500V-3.500H-1.500ZM3.500 -6.500H6.500V-3.500H3.500ZM-6.500 -1.500H-3.500V1.500H-6.500ZM-1.500 -1.500H1.500V1.500H-1.500ZM3.500 -1.500H6.500V1.500H3.500ZM-6.500 3.500H-3.500V6.500H-6.500ZM-1.500 3.500H1.500V6.500H-1.500ZM3.500 3.500H6.500V6.500H3.500ZM-3.500 -5H-1.500M1.500 -5H3.500M-3.500 0H-1.500M1.500 0H3.500M-3.500 5H-1.500M1.500 5H3.500M-5 -3.500V-1.500M-5 1.500V3.500M0 -3.500V-1.500M0 1.500V3.500M5 -3.500V-1.500M5 1.500V3.500" fill="#303d46" stroke="#dddddd" /></g> },
  { icon: <g><circle r="7" fill={D} stroke={G} strokeWidth="1.5" strokeDasharray="4 2" /><circle r="4" fill={G} /></g> },
  null,
  { icon: <g><path d="M-8 -6H-3V-4H8V7H-8Z" fill={G} /><path d="M4 -6H7V-5H4Z" fill={G} /><circle cy="1" r="4.500" fill={G} stroke={D} strokeWidth="1.5" /><circle cy="1" r="2.500" fill={D} /></g> },
];

const picture = (
  <g>
    <path d="M-7 -7H7V7H-7Z" fill={M} />
    <path d="M-6 5V3L-2 -3L1 2L3 0L6 5Z" fill={D} />
    <circle cx="2" cy="-4" r="2" fill={D} />
  </g>
);

function ToolButton({ label, on, children }: { label: string; on?: boolean; children: React.ReactNode }) {
  return (
    <button type="button" aria-label={label} className={on ? 'shrink-0 rounded-[1px] bg-[#5285a6]' : 'shrink-0'}>
      <svg width="22" height="22" viewBox="-11 -11 22 22" className="block">{children}</svg>
    </button>
  );
}

function UVToolbar() {
  return (
    <div className="flex h-8 shrink-0 items-center gap-px pr-[13px] pl-[9px]">
      {uvTools.map((t, i) =>
        t === null ? (
          <span key={i} className="flex w-1 justify-center"><span className="h-[22px] w-[2px] bg-[#4f4f4f]" /></span>
        ) : (
          <ToolButton key={i} label={`UV display ${i + 1}`} on={t.on}>{t.icon}</ToolButton>
        ),
      )}
      <div className="flex-1" />
      <ToolButton label="Display image">{picture}</ToolButton>
      <ToolButton label="Checker map" on>
        <rect x="-8" y="-8" width="16" height="16" fill="#303030" />
        {dots(-7, -7, 7, 7, 2, '#dddddd')}
      </ToolButton>
      <button type="button" aria-label="Checker options" className="flex w-[18px] justify-center">
        <svg width="8" height="5"><path d="M0 0H8L4 5Z" fill="#aaaaaa" /></svg>
      </button>
      <input aria-label="Texture" placeholder="No texture found" readOnly className="h-5 w-[118px] rounded-sm bg-[#3f3f3f] pl-[5px] text-xs placeholder:text-[#858585]" />
      <ToolButton label="RGB channels">
        <circle r="7.500" fill={D} stroke={M} strokeWidth="1.5" strokeDasharray="3 2" />
        <path d="M0 -6L4 -5V-3H1ZM-4 4L0 4V6L-2 6Z" fill={G} />
        <text y="3" textAnchor="middle" fontSize="8" fontWeight="700" fill={M} fontFamily="Noto Sans">RGB</text>
      </ToolButton>
      <ToolButton label="Dim image" on>
        <rect x="-8" y="-8" width="16" height="16" fill="#303030" />
        {picture}
      </ToolButton>
      <input
        type="range"
        aria-label="Image brightness"
        defaultValue={46}
        className="mx-px h-[13px] w-[54px] appearance-none bg-transparent [&::-webkit-slider-runnable-track]:h-1 [&::-webkit-slider-runnable-track]:rounded-full [&::-webkit-slider-runnable-track]:bg-[#2b2b2b] [&::-webkit-slider-thumb]:-mt-1 [&::-webkit-slider-thumb]:h-[13px] [&::-webkit-slider-thumb]:w-[7px] [&::-webkit-slider-thumb]:appearance-none [&::-webkit-slider-thumb]:rounded-sm [&::-webkit-slider-thumb]:bg-[#c2c2c2]"
      />
      <button type="button" aria-label="More tools" className="ml-1">
        <svg width="15" height="20" className="block"><path d="M0 0H1V5L4 10L1 15V20H0ZM10 0H11V5L14 10L11 15V20H10Z" fill="#a0a0a0" /></svg>
      </button>
    </div>
  );
}

function UVEditor() {
  return (
    <section className="absolute top-[109px] left-[54px] flex h-[787px] w-[708px] flex-col overflow-hidden rounded-[10px] bg-[#444444] shadow-[0_8px_28px_rgba(0,0,0,0.4),0_0_1px_1px_rgba(0,0,0,0.3)]">
      <div className="relative flex h-[29px] shrink-0 items-center border-b border-[#1c1c1c] bg-[#e4e5e7] pl-2">
        <div className="flex gap-2">
          {['Close', 'Minimize', 'Zoom'].map((b) => <button key={b} type="button" aria-label={b} className="size-3 rounded-full border border-[#b6b7b9] bg-[#c9cacc]" />)}
        </div>
        <h1 className="absolute inset-x-0 text-center font-['Inter',sans-serif] text-[13px] font-bold text-[#a2a3a5]">UV Editor</h1>
      </div>
      <nav className="flex h-[23px] shrink-0 items-center gap-[17px] pl-[10px] text-[11px] text-[#c8c8c8]">
        {['Edit', 'Create', 'Select', 'Cut/Sew', 'Modify', 'Tools', 'View', 'Image', 'Textures', 'UV Sets', 'Help'].map((m) => <button key={m} type="button">{m}</button>)}
      </nav>
      <UVToolbar />
      <div className="relative mx-[3px] mb-[2px] min-h-0 flex-1 bg-[#5c5c5c]">
        <UVCanvas />
        <p className="absolute right-[5px] bottom-[3px] font-['Open_Sans',sans-serif] text-[10px] leading-[14px] font-bold text-white">(0/13) UV shells, (0/20) overlapping UVs, (0/0) reversed UVs</p>
      </div>
    </section>
  );
}

export default function App() {
  return (
    <div className="relative flex h-screen flex-col overflow-hidden bg-[#444444] font-['Noto_Sans','Open_Sans',sans-serif]">
      <Shelf />
      <main className="flex min-h-0 flex-1 border-t border-[#3a3a3a]">
        <SidePanel />
        <Viewport />
      </main>
      <UVEditor />
    </div>
  );
}
